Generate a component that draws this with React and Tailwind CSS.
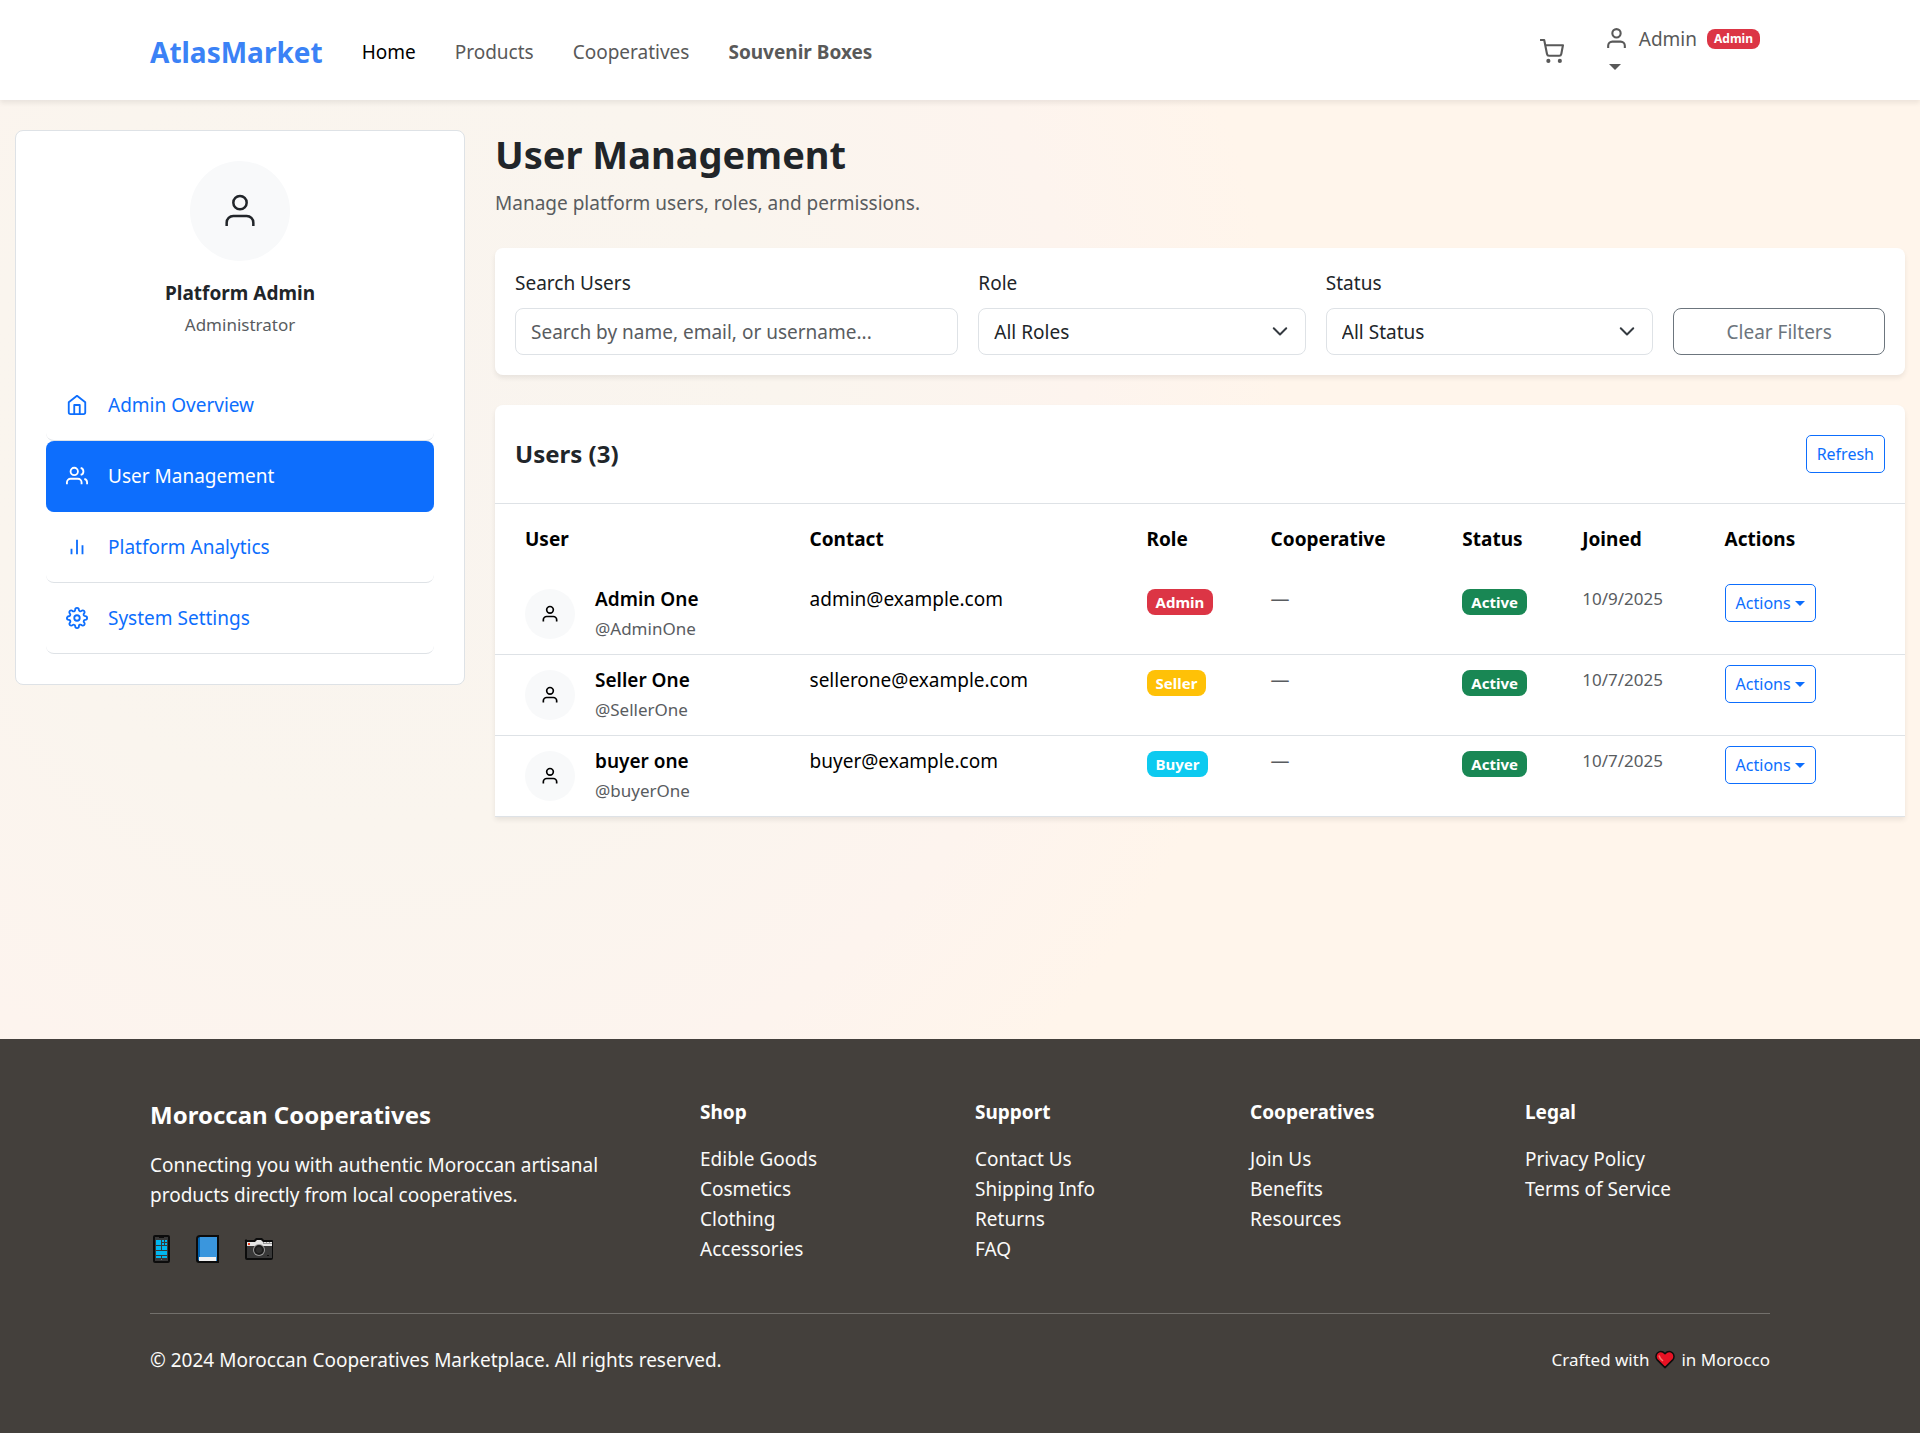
import React from 'react';

function Icon({ size = 22, strokeWidth = 2, children }) {
  return (
    <svg
      width={size}
      height={size}
      viewBox="0 0 24 24"
      fill="none"
      stroke="currentColor"
      strokeWidth={strokeWidth}
      strokeLinejoin="round"
      aria-hidden="true"
      className="shrink-0"
    >
      {children}
    </svg>
  );
}

const UserIcon = (props) => (
  <Icon {...props}>
    <path d="M20 21v-2a4 4 0 0 0-4-4H8a4 4 0 0 0-4 4v2" />
    <circle cx="12" cy="7" r="4" />
  </Icon>
);

const CartIcon = (props) => (
  <Icon {...props}>
    <circle cx="9" cy="21" r="1" />
    <circle cx="20" cy="21" r="1" />
    <path d="M1 1h4l2.68 13.39a2 2 0 0 0 2 1.61h9.72a2 2 0 0 0 2-1.61L23 6H6" />
  </Icon>
);

const HomeIcon = () => (
  <Icon>
    <path d="M3 9l9-7 9 7v11a2 2 0 0 1-2 2H5a2 2 0 0 1-2-2z" />
    <path d="M9 22V12h6v10" />
  </Icon>
);

const UsersIcon = () => (
  <Icon>
    <path d="M17 21v-2a4 4 0 0 0-4-4H5a4 4 0 0 0-4 4v2" />
    <circle cx="9" cy="7" r="4" />
    <path d="M23 21v-2a4 4 0 0 0-3-3.87" />
    <path d="M16 3.13a4 4 0 0 1 0 7.75" />
  </Icon>
);

const ChartIcon = () => (
  <Icon>
    <path d="M18 20V10M12 20V4M6 20v-6" />
  </Icon>
);

const SettingsIcon = () => (
  <Icon>
    <circle cx="12" cy="12" r="3" />
    <path d="M19.4 15a1.65 1.65 0 0 0 .33 1.82l.06.06a2 2 0 0 1 0 2.83 2 2 0 0 1-2.83 0l-.06-.06a1.65 1.65 0 0 0-1.82-.33 1.65 1.65 0 0 0-1 1.51V21a2 2 0 0 1-2 2 2 2 0 0 1-2-2v-.09A1.65 1.65 0 0 0 9 19.4a1.65 1.65 0 0 0-1.82.33l-.06.06a2 2 0 0 1-2.83 0 2 2 0 0 1 0-2.83l.06-.06a1.65 1.65 0 0 0 .33-1.82 1.65 1.65 0 0 0-1.51-1H3a2 2 0 0 1-2-2 2 2 0 0 1 2-2h.09A1.65 1.65 0 0 0 4.6 9a1.65 1.65 0 0 0-.33-1.82l-.06-.06a2 2 0 0 1 0-2.83 2 2 0 0 1 2.83 0l.06.06a1.65 1.65 0 0 0 1.82.33H9a1.65 1.65 0 0 0 1-1.51V3a2 2 0 0 1 2-2 2 2 0 0 1 2 2v.09a1.65 1.65 0 0 0 1 1.51 1.65 1.65 0 0 0 1.82-.33l.06-.06a2 2 0 0 1 2.83 0 2 2 0 0 1 0 2.83l-.06.06a1.65 1.65 0 0 0-.33 1.82V9a1.65 1.65 0 0 0 1.51 1H21a2 2 0 0 1 2 2 2 2 0 0 1-2 2h-.09a1.65 1.65 0 0 0-1.51 1z" />
  </Icon>
);

const PhoneGlyph = () => (
  <svg width="24" height="30" viewBox="0 0 24 30" aria-hidden="true">
    <rect x="3" y="1" width="17" height="28" rx="2" fill="#0c0c0c" />
    <rect x="5" y="3" width="13" height="24" fill="#383838" />
    <rect x="9" y="3" width="5" height="1" fill="#0c0c0c" />
    <g fill="#00b7f0">
      <rect x="6" y="6" width="5" height="5" />
      <rect x="12" y="6" width="2" height="2" />
      <rect x="15" y="6" width="2" height="2" />
      <rect x="12" y="9" width="2" height="2" />
      <rect x="15" y="9" width="2" height="2" />
      <rect x="6" y="12" width="5" height="4" />
      <rect x="12" y="12" width="5" height="4" />
      <rect x="6" y="17" width="11" height="4" />
      <rect x="6" y="22" width="5" height="2" />
      <rect x="12" y="22" width="5" height="2" />
    </g>
    <rect x="11" y="25" width="1" height="1" fill="#777" />
  </svg>
);

const BookGlyph = () => (
  <svg width="28" height="30" viewBox="0 0 28 30" aria-hidden="true">
    <path d="M6 1h19v28H5a3 3 0 0 1-3-3V5a4 4 0 0 1 4-4z" fill="#0c0c0c" />
    <path d="M6 3h1v23H4V5a2 2 0 0 1 2-2z" fill="#0063b1" />
    <rect x="6" y="3" width="17" height="20" fill="#3a96dd" />
    <path d="M6 3l-1 1v22h18v1H6a2 2 0 0 1-2-2V5z" fill="#0063b1" />
    <rect x="5" y="23" width="17" height="4" fill="#f2f2f2" />
    <rect x="22" y="22" width="1" height="5" fill="#3a96dd" />
  </svg>
);

const CameraGlyph = () => (
  <svg width="34" height="30" viewBox="0 0 34 30" aria-hidden="true">
    <path d="M5 6h7l2-2h6l2 2h8a1 1 0 0 1 1 1v17a2 2 0 0 1-2 2H5a2 2 0 0 1-2-2V7a1 1 0 0 1 2-1z" fill="#0c0c0c" />
    <rect x="5" y="12" width="25" height="12" fill="#383838" />
    <path d="M5 8h8l2-2h4l2 2h9v4H5z" fill="#e6e6e6" />
    <path d="M21 8h1v1h2V8h1v1h2V8h1v1h2v1h-9z" fill="#9a9a9a" />
    <rect x="6" y="9" width="2" height="2" fill="#f03a17" />
    <circle cx="17" cy="16" r="6" fill="#9b9b9b" />
    <circle cx="17" cy="16" r="5" fill="#1c1c1c" />
    <circle cx="17" cy="16" r="3" fill="#2e2e2e" />
    <rect x="25" y="21" width="2" height="1" fill="#111" />
  </svg>
);

const HeartGlyph = () => (
  <svg width="20" height="20" viewBox="0 0 20 20" role="img" aria-label="love">
    <path
      d="M10 17.6L2 9.6C.6 8 .6 4.6 2.400 3 4.600 1 7.600 1.200 10 3.600c2.400-2.400 5.400-2.600 7.600-.6 1.800 1.600 1.800 5 .4 6.600z"
      fill="#e81224"
      stroke="#0c0c0c"
      strokeWidth="1.500"
      strokeLinejoin="round"
    />
    <path d="M4 5.500c.4 2 1.600 3.600 4 5.500" fill="none" stroke="#f8766d" strokeWidth="1.500" />
  </svg>
);

const Caret = ({ className = '' }) => (
  <span
    aria-hidden="true"
    className={`inline-block border-t-[5px] border-x-[5px] border-x-transparent border-t-current ${className}`}
  />
);

const NAV = [
  { label: 'Home', style: 'text-black' },
  { label: 'Products', style: 'text-[#595959]' },
  { label: 'Cooperatives', style: 'text-[#595959]' },
  { label: 'Souvenir Boxes', style: 'text-[#595959] font-bold' },
];

function Header() {
  return (
    <header className="relative bg-white shadow-[0_3px_5px_rgba(0,0,0,0.075)]">
      <div className="mx-auto flex h-[100px] max-w-[1650px] items-center justify-between px-[15px] pt-[3px]">
        <nav className="flex items-center gap-[39px]" aria-label="Main">
          <a href="#" className="text-[28px] font-bold text-[#3b82f6]">
            AtlasMarket
          </a>
          {NAV.map((n) => (
            <a key={n.label} href="#" className={n.style}>
              {n.label}
            </a>
          ))}
        </nav>
        <div className="flex items-center gap-10 pr-[10px] text-[#595959]">
          <a href="#" aria-label="Cart">
            <CartIcon size={25} />
          </a>
          <button type="button" className="flex flex-col items-start" aria-haspopup="menu">
            <span className="flex items-center">
              <UserIcon size={25} />
              <span className="ml-[10px]">Admin</span>
              <span className="ml-[10px] rounded-lg bg-[#dc3545] px-[7px] text-xs leading-5 font-bold text-white">Admin</span>
            </span>
            <span className="flex h-[26px] items-center pl-[5px]">
              <Caret className="border-x-[6px] border-t-[6px]" />
            </span>
          </button>
        </div>
      </div>
    </header>
  );
}

const MENU = [
  { label: 'Admin Overview', icon: <HomeIcon /> },
  { label: 'User Management', icon: <UsersIcon />, active: true },
  { label: 'Platform Analytics', icon: <ChartIcon /> },
  { label: 'System Settings', icon: <SettingsIcon /> },
];

function Sidebar() {
  return (
    <aside className="self-start rounded-lg border border-[#dee2e6] bg-white p-[30px]">
      <div className="flex flex-col items-center">
        <div className="flex size-[100px] items-center justify-center rounded-full bg-[#f8f9fa] text-[#212529]">
          <UserIcon size={40} strokeWidth={1.5} />
        </div>
        <h2 className="mt-5 leading-6 font-bold">Platform Admin</h2>
        <p className="mt-[5px] text-[17px] leading-[30px] text-[#595c5f]">Administrator</p>
      </div>
      <nav className="mt-[30px]" aria-label="Dashboard">
        {MENU.map((m) => (
          <a
            key={m.label}
            href="#"
            aria-current={m.active ? 'page' : undefined}
            className={
              m.active
                ? 'flex items-center gap-5 rounded-lg border-b border-[#0d6efd] bg-[#0d6efd] p-5 text-white'
                : 'flex items-center gap-5 rounded-lg border-b border-[#dee2e6] p-5 text-[#0d6efd]'
            }
          >
            {m.icon}
            {m.label}
          </a>
        ))}
      </nav>
    </aside>
  );
}

function SelectField({ id, label, value }) {
  return (
    <div className="col-span-3">
      <label htmlFor={id} className="mb-[10px] block">
        {label}
      </label>
      <div className="relative">
        <select id={id} className="h-[47px] w-full appearance-none rounded-lg border border-[#dee2e6] bg-white px-[15px]">
          <option>{value}</option>
        </select>
        <svg
          viewBox="0 0 16 16"
          aria-hidden="true"
          className="pointer-events-none absolute top-[14px] right-4 size-5"
          fill="none"
          stroke="#343a40"
          strokeWidth="1.6"
          strokeLinecap="round"
          strokeLinejoin="round"
        >
          <path d="m3 5 5 5 5-5" />
        </svg>
      </div>
    </div>
  );
}

const CARD_SHADOW = 'shadow-[0_3px_5px_rgba(0,0,0,0.075)]';

const USERS = [
  { name: 'Admin One', handle: '@AdminOne', email: 'admin@example.com', role: 'Admin', color: 'bg-[#dc3545]', joined: '10/9/2025' },
  { name: 'Seller One', handle: '@SellerOne', email: 'sellerone@example.com', role: 'Seller', color: 'bg-[#ffc107]', joined: '10/7/2025' },
  { name: 'buyer one', handle: '@buyerOne', email: 'buyer@example.com', role: 'Buyer', color: 'bg-[#0dcaf0]', joined: '10/7/2025' },
];

const COLUMNS = [
  { label: 'User', width: 'w-[21.6%] pl-[30px]' },
  { label: 'Contact', width: 'w-[23.9%]' },
  { label: 'Role', width: 'w-[8.8%]' },
  { label: 'Cooperative', width: 'w-[13.6%]' },
  { label: 'Status', width: 'w-[8.5%]' },
  { label: 'Joined', width: 'w-[10.1%]' },
  { label: 'Actions', width: 'w-[13.5%]' },
];

const Badge = ({ color, children }) => (
  <span className={`mt-[5px] block w-fit rounded-lg px-[9px] text-[15px] leading-[26px] font-bold text-white ${color}`}>{children}</span>
);

const SMALL_BUTTON = 'h-[38px] rounded-[5px] border border-[#0d6efd] px-[10px] text-base text-[#0d6efd]';

function Users() {
  return (
    <section className={`mt-[30px] rounded-t-lg bg-white ${CARD_SHADOW}`}>
      <div className="flex items-center justify-between border-b border-[#dee2e6] px-5 py-[30px]">
        <h2 className="text-2xl font-bold">Users (3)</h2>
        <button type="button" className={SMALL_BUTTON}>
          Refresh
        </button>
      </div>
      <table className="w-full table-fixed text-left text-black">
        <thead>
          <tr>
            {COLUMNS.map((c) => (
              <th key={c.label} scope="col" className={`px-[10px] py-5 font-bold ${c.width}`}>
                {c.label}
              </th>
            ))}
          </tr>
        </thead>
        <tbody>
          {USERS.map((u) => (
            <tr key={u.handle} className="border-b border-[#dee2e6] align-top">
              <td className="py-[10px] pr-[10px] pl-[30px]">
                <div className="flex items-center gap-5">
                  <div className="flex size-[50px] shrink-0 items-center justify-center rounded-full bg-[#f8f9fa]">
                    <UserIcon size={20} />
                  </div>
                  <div>
                    <div className="font-semibold">{u.name}</div>
                    <div className="text-[17px] text-[#595c5f]">{u.handle}</div>
                  </div>
                </div>
              </td>
              <td className="p-[10px]">{u.email}</td>
              <td className="p-[10px]">
                <Badge color={u.color}>{u.role}</Badge>
              </td>
              <td className="p-[10px] text-[#595c5f]">—</td>
              <td className="p-[10px]">
                <Badge color="bg-[#198754]">Active</Badge>
              </td>
              <td className="p-[10px] text-[17px] text-[#595c5f]">{u.joined}</td>
              <td className="p-[10px]">
                <button type="button" aria-haspopup="menu" className={`${SMALL_BUTTON} flex items-center gap-1`}>
                  Actions
                  <Caret />
                </button>
              </td>
            </tr>
          ))}
        </tbody>
      </table>
    </section>
  );
}

const FOOTER = [
  { title: 'Shop', links: ['Edible Goods', 'Cosmetics', 'Clothing', 'Accessories'] },
  { title: 'Support', links: ['Contact Us', 'Shipping Info', 'Returns', 'FAQ'] },
  { title: 'Cooperatives', links: ['Join Us', 'Benefits', 'Resources'] },
  { title: 'Legal', links: ['Privacy Policy', 'Terms of Service'] },
];

function Footer() {
  return (
    <footer className="bg-[#44403c] pt-[61px] pb-[58px] text-[#fafaf9]">
      <div className="mx-auto max-w-[1650px] px-[15px]">
        <div className="grid grid-cols-6 gap-[30px]">
          <div className="col-span-2">
            <h2 className="text-2xl leading-[30px] font-bold text-white">Moroccan Cooperatives</h2>
            <p className="mt-5 max-w-[460px]">Connecting you with authentic Moroccan artisanal products directly from local cooperatives.</p>
            <div className="mt-6 flex gap-5">
              <a href="#" aria-label="Mobile app">
                <PhoneGlyph />
              </a>
              <a href="#" aria-label="Facebook">
                <BookGlyph />
              </a>
              <a href="#" aria-label="Instagram">
                <CameraGlyph />
              </a>
            </div>
          </div>
          {FOOTER.map((col) => (
            <div key={col.title}>
              <h3 className="leading-6 font-bold text-white">{col.title}</h3>
              <ul className="mt-5">
                {col.links.map((l) => (
                  <li key={l}>
                    <a href="#">{l}</a>
                  </li>
                ))}
              </ul>
            </div>
          ))}
        </div>
        <div className="mt-[49px] flex items-center justify-between border-t border-[#73706c] pt-[31px]">
          <p>© 2024 Moroccan Cooperatives Marketplace. All rights reserved.</p>
          <p className="flex items-center gap-[6px] text-[17px]">
            Crafted with <HeartGlyph /> in Morocco
          </p>
        </div>
      </div>
    </footer>
  );
}

export default function App() {
  return (
    <div className="flex min-h-screen flex-col bg-[#fff5eb] bg-[radial-gradient(circle_at_20%_30%,#f9f4ef_0,#faf5ee_400px,#fdf4ee_700px,#fff5eb_900px)] font-['Noto_Sans','Open_Sans',sans-serif] text-[19px] leading-[30px] text-[#212529]">
      <Header />
      <div className="grid flex-1 grid-cols-4 content-start gap-[30px] px-[15px] py-[30px]">
        <Sidebar />
        <main className="col-span-3">
          <h1 className="text-[38px] leading-[48px] font-bold">User Management</h1>
          <p className="mt-[10px] text-[#595c5f]">Manage platform users, roles, and permissions.</p>
          <section className={`mt-[30px] rounded-lg bg-white p-5 ${CARD_SHADOW}`}>
            <form className="grid grid-cols-12 items-end gap-5">
              <div className="col-span-4">
                <label htmlFor="search" className="mb-[10px] block">
                  Search Users
                </label>
                <input
                  id="search"
                  type="text"
                  placeholder="Search by name, email, or username..."
                  className="block h-[47px] w-full rounded-lg border border-[#dee2e6] px-[15px] placeholder:text-[#595c5f]"
                />
              </div>
              <SelectField id="role" label="Role" value="All Roles" />
              <SelectField id="status" label="Status" value="All Status" />
              <button type="button" className="col-span-2 h-[47px] rounded-lg border border-[#6c757d] text-[#6c757d]">
                Clear Filters
              </button>
            </form>
          </section>
          <Users />
        </main>
      </div>
      <Footer />
    </div>
  );
}
